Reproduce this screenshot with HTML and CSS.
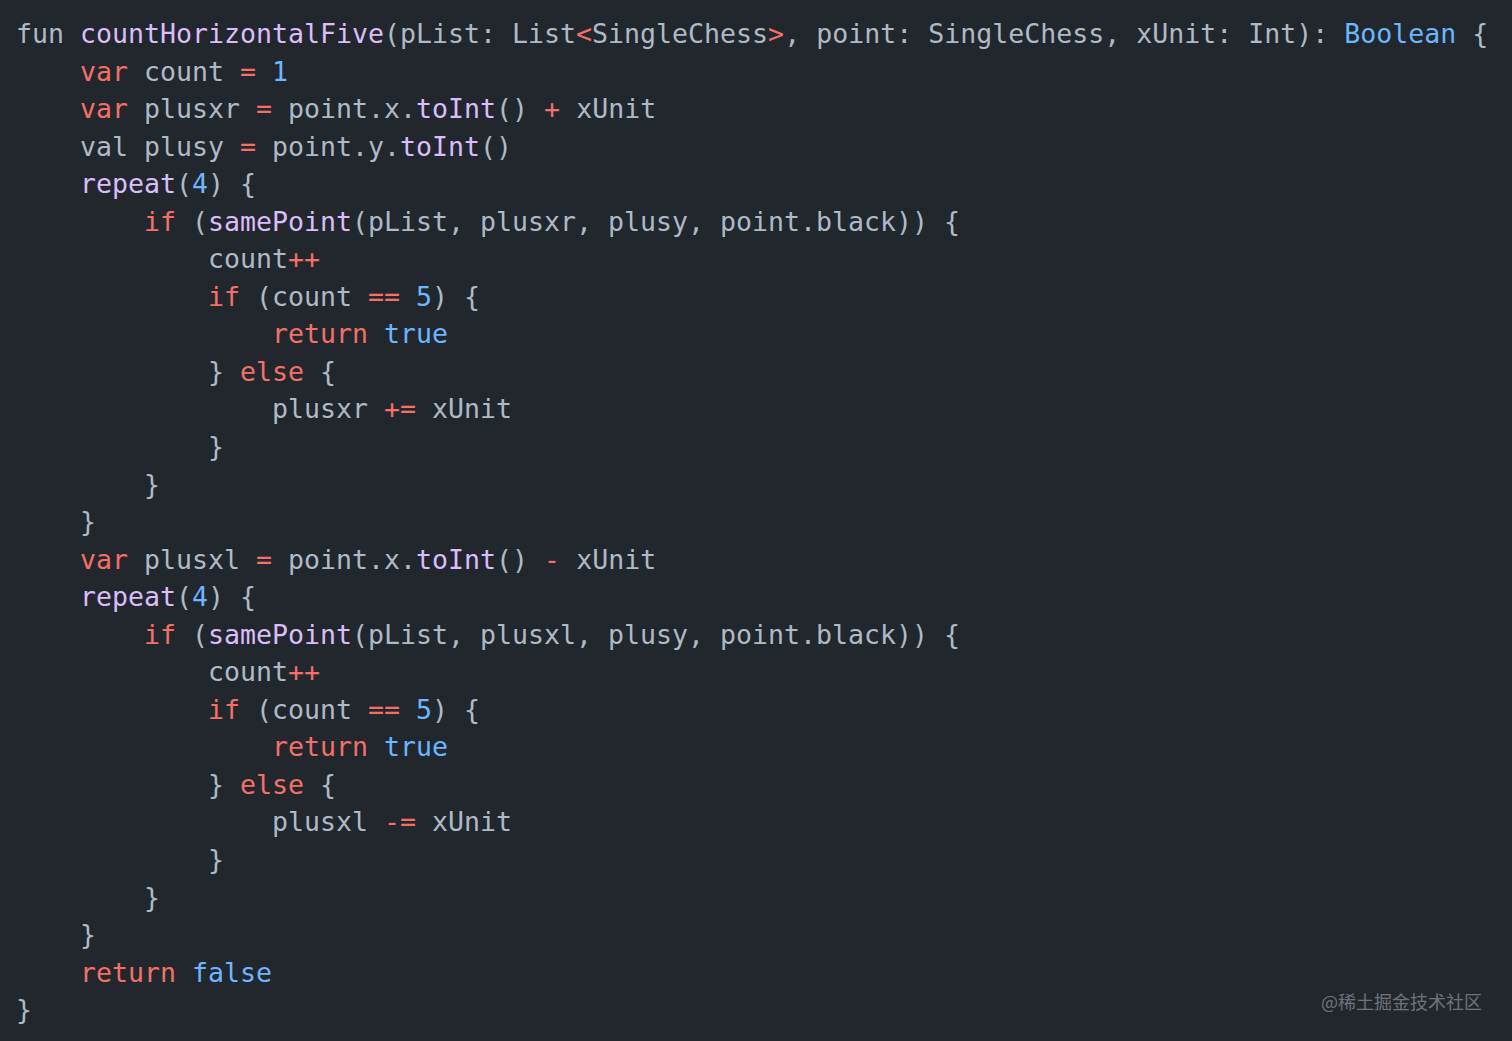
FILE: index.html
```html
<!DOCTYPE html>
<html lang="en">
<head>
<meta charset="utf-8">
<title>countHorizontalFive</title>
<link rel="stylesheet" href="styles.css">
</head>
<body>
<main class="editor">
<pre class="code"><code>fun <span class="f">countHorizontalFive</span>(pList: List<span class="k">&lt;</span>SingleChess<span class="k">&gt;</span>, point: SingleChess, xUnit: Int): <span class="c">Boolean</span> {
    <span class="k">var</span> count <span class="k">=</span> <span class="c">1</span>
    <span class="k">var</span> plusxr <span class="k">=</span> point.x.<span class="f">toInt</span>() <span class="k">+</span> xUnit
    val plusy <span class="k">=</span> point.y.<span class="f">toInt</span>()
    <span class="f">repeat</span>(<span class="c">4</span>) {
        <span class="k">if</span> (<span class="f">samePoint</span>(pList, plusxr, plusy, point.black)) {
            count<span class="k">++</span>
            <span class="k">if</span> (count <span class="k">==</span> <span class="c">5</span>) {
                <span class="k">return</span> <span class="c">true</span>
            } <span class="k">else</span> {
                plusxr <span class="k">+=</span> xUnit
            }
        }
    }
    <span class="k">var</span> plusxl <span class="k">=</span> point.x.<span class="f">toInt</span>() <span class="k">-</span> xUnit
    <span class="f">repeat</span>(<span class="c">4</span>) {
        <span class="k">if</span> (<span class="f">samePoint</span>(pList, plusxl, plusy, point.black)) {
            count<span class="k">++</span>
            <span class="k">if</span> (count <span class="k">==</span> <span class="c">5</span>) {
                <span class="k">return</span> <span class="c">true</span>
            } <span class="k">else</span> {
                plusxl <span class="k">-=</span> xUnit
            }
        }
    }
    <span class="k">return</span> <span class="c">false</span>
}</code></pre>
<div class="watermark">@稀土掘金技术社区</div>
</main>
</body>
</html>
```

FILE: styles.css
```css
html, body {
  margin: 0;
  padding: 0;
  background: #22272e;
}

.editor {
  position: relative;
  width: 1512px;
  height: 1041px;
  background: #22272e;
  overflow: hidden;
}

.code {
  margin: 0;
  padding: 15px 16px;
  font-family: "DejaVu Sans Mono", "Liberation Mono", monospace;
  font-size: 26.58px;
  line-height: 37.54px;
  color: #adbac7;
  white-space: pre;
}

.code code {
  font-family: inherit;
}

.k { color: #f47067; }
.f { color: #dcbdfb; }
.c { color: #6cb6ff; }

.watermark {
  position: absolute;
  right: 30px;
  top: 988px;
  font-family: "Noto Sans CJK SC", "Noto Sans", sans-serif;
  font-size: 18px;
  line-height: 26px;
  color: #6e737b;
}
```
